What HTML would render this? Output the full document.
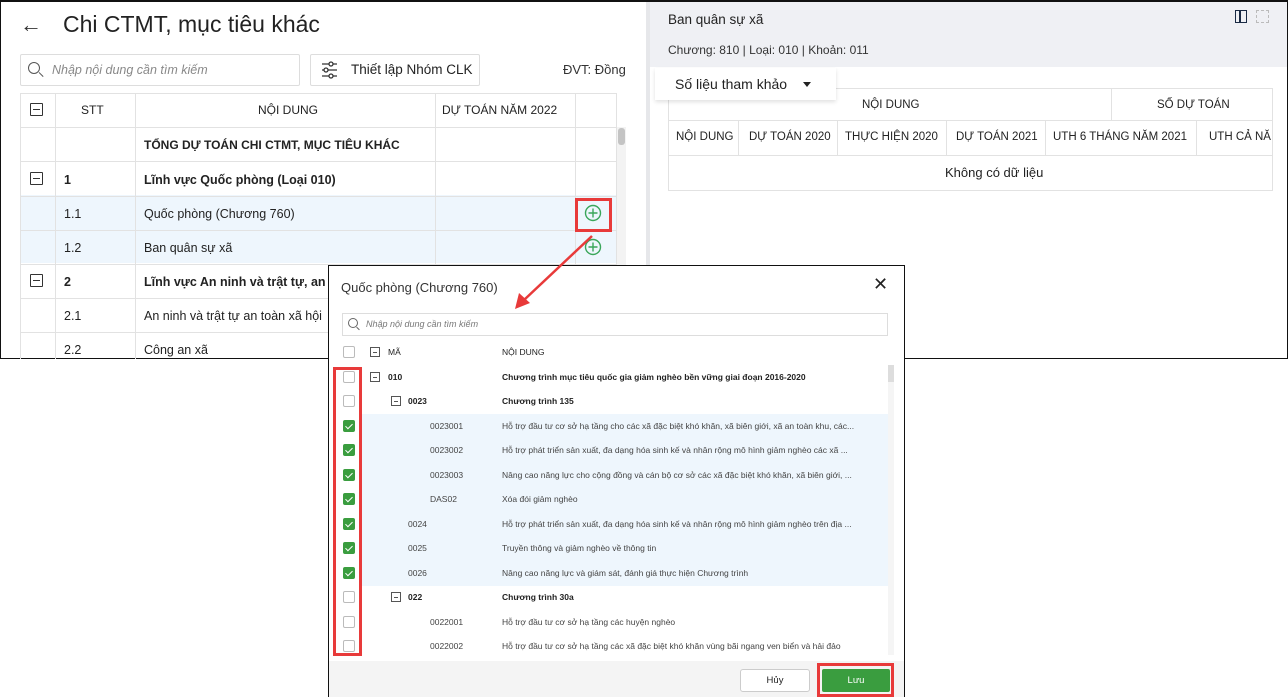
<!DOCTYPE html>
<html><head><meta charset="utf-8"><style>
*{box-sizing:border-box;margin:0;padding:0}
body{width:1288px;height:697px;position:relative;background:#fff;font-family:"Liberation Sans",sans-serif;color:#222;overflow:hidden}
.a{position:absolute}
.t{position:absolute;white-space:nowrap}
.cb{position:absolute;width:12px;height:12px;border:1px solid #bbb;border-radius:2px;background:#fff}
.cb.on{background:#3a9d3f;border-color:#3a9d3f}
.cb.on:after{content:"";position:absolute;left:3px;top:1px;width:3px;height:6px;border:solid #fff;border-width:0 1px 1px 0;transform:rotate(45deg)}
.mi{position:absolute;width:13px;height:13px;border:1px solid #333;border-radius:1px}
.mi:after{content:"";position:absolute;left:2px;right:2px;top:5px;height:1px;background:#333}
.sm{position:absolute;width:10px;height:10px;border:1px solid #555}
.sm:after{content:"";position:absolute;left:2px;right:2px;top:3.5px;height:1px;background:#555}
.rh{font-size:11.5px}
</style></head><body>
<div class="a" style="left:0;top:0;width:1288px;height:359px;border:1px solid #111;border-top:2px solid #111"></div>
<div class="a" style="left:646px;top:2px;width:4px;height:356px;background:#e6e7ea"></div>
<div class="a" style="left:650px;top:2px;width:637px;height:65px;background:#eff0f4"></div>
<div class="t" style="left:668px;top:12px;font-size:13.5px;color:#222">Ban quân sự xã</div>
<div class="t" style="left:668px;top:43px;font-size:12px;color:#333">Chương: 810 | Loại: 010 | Khoản: 011</div>
<div class="a" style="left:1235px;top:10px;width:12px;height:13px;border:1.5px solid #1a2a44"></div>
<div class="a" style="left:1239px;top:10px;width:1.5px;height:13px;background:#1a2a44"></div>
<div class="a" style="left:1256px;top:10px;width:13px;height:13px;border:1px dashed #bbb"></div>
<div class="a" style="left:668px;top:88px;width:605px;height:103px;border:1px solid #e2e2e2"></div>
<div class="a" style="left:668px;top:120px;width:605px;height:1px;background:#e2e2e2"></div>
<div class="a" style="left:668px;top:155px;width:605px;height:1px;background:#e2e2e2"></div>
<div class="a" style="left:1111px;top:88px;width:1px;height:32px;background:#e2e2e2"></div>
<div class="a" style="left:738px;top:121px;width:1px;height:34px;background:#e2e2e2"></div>
<div class="a" style="left:837px;top:121px;width:1px;height:34px;background:#e2e2e2"></div>
<div class="a" style="left:946px;top:121px;width:1px;height:34px;background:#e2e2e2"></div>
<div class="a" style="left:1045px;top:121px;width:1px;height:34px;background:#e2e2e2"></div>
<div class="a" style="left:1196px;top:121px;width:1px;height:34px;background:#e2e2e2"></div>
<div class="a" style="left:655px;top:68px;width:181px;height:32px;background:#fff;box-shadow:0 2px 4px rgba(0,0,0,.12)"></div>
<div class="t" style="left:675px;top:76px;font-size:14px;color:#222">Số liệu tham khảo</div>
<div class="a" style="left:803px;top:82px;border:4px solid transparent;border-top:5px solid #222"></div>
<div class="t rh" style="left:862px;top:99px">NỘI DUNG</div>
<div class="t rh" style="left:1157px;top:99px">SỐ DỰ TOÁN</div>
<div class="t rh" style="left:676px;top:131px">NỘI DUNG</div>
<div class="t rh" style="left:749px;top:131px">DỰ TOÁN 2020</div>
<div class="t rh" style="left:845px;top:131px">THỰC HIỆN 2020</div>
<div class="t rh" style="left:956px;top:131px">DỰ TOÁN 2021</div>
<div class="t rh" style="left:1053px;top:131px">UTH 6 THÁNG NĂM 2021</div>
<div class="t rh" style="left:1209px;top:131px">UTH CẢ NĂ</div>
<div class="t" style="left:945px;top:165px;font-size:13px">Không có dữ liệu</div>
<div class="t" style="left:20px;top:12px;font-size:22px;color:#333">←</div>
<div class="t" style="left:63px;top:11px;font-size:23px;color:#222">Chi CTMT, mục tiêu khác</div>
<div class="a" style="left:20px;top:54px;width:280px;height:32px;border:1px solid #ddd;border-radius:2px"></div>
<div class="a" style="left:28px;top:62px;width:12px;height:12px;border:1.3px solid #555;border-radius:50%"></div>
<div class="a" style="left:38px;top:74px;width:6px;height:1.3px;background:#555;transform:rotate(45deg)"></div>
<div class="t" style="left:52px;top:63px;font-size:12.5px;font-style:italic;color:#888">Nhập nội dung cần tìm kiếm</div>
<div class="a" style="left:310px;top:54px;width:170px;height:32px;border:1px solid #ddd;border-radius:2px"></div>
<svg class="a" style="left:321px;top:61px" width="17" height="18" viewBox="0 0 17 18" fill="none" stroke="#333" stroke-width="1.3"><path d="M1 3h15M1 9h15M1 15h15"/><circle cx="10" cy="3" r="2" fill="#fff"/><circle cx="5" cy="9" r="2" fill="#fff"/><circle cx="10" cy="15" r="2" fill="#fff"/></svg>
<div class="t" style="left:351px;top:62px;font-size:13.5px">Thiết lập Nhóm CLK</div>
<div class="t" style="left:563px;top:62px;font-size:13px;color:#333">ĐVT: Đồng</div>
<div class="a" style="left:20px;top:195px;width:597px;height:68px;background:#eef6fd"></div>
<div class="a" style="left:20px;top:93px;width:597px;height:266px;border:1px solid #e2e2e2;border-bottom:none"></div>
<div class="a" style="left:55px;top:93px;width:1px;height:266px;background:#e2e2e2"></div>
<div class="a" style="left:135px;top:93px;width:1px;height:266px;background:#e2e2e2"></div>
<div class="a" style="left:435px;top:93px;width:1px;height:266px;background:#e2e2e2"></div>
<div class="a" style="left:575px;top:93px;width:1px;height:266px;background:#e2e2e2"></div>
<div class="a" style="left:20px;top:127px;width:597px;height:1px;background:#e2e2e2"></div>
<div class="a" style="left:20px;top:161px;width:597px;height:1px;background:#e2e2e2"></div>
<div class="a" style="left:20px;top:196px;width:597px;height:1px;background:#e2e2e2"></div>
<div class="a" style="left:20px;top:230px;width:597px;height:1px;background:#e2e2e2"></div>
<div class="a" style="left:20px;top:264px;width:597px;height:1px;background:#e2e2e2"></div>
<div class="a" style="left:20px;top:298px;width:597px;height:1px;background:#e2e2e2"></div>
<div class="a" style="left:20px;top:332px;width:597px;height:1px;background:#e2e2e2"></div>
<div class="a" style="left:617px;top:127px;width:9px;height:231px;background:#f3f3f3"></div>
<div class="a" style="left:618px;top:128px;width:7px;height:17px;background:#c4c4c4;border-radius:3px"></div>
<div class="mi" style="left:30px;top:103px"></div>
<div class="t" style="left:81px;top:103px;font-size:12px">STT</div>
<div class="t" style="left:258px;top:103px;font-size:12px">NỘI DUNG</div>
<div class="t" style="left:442px;top:103px;font-size:12px">DỰ TOÁN NĂM 2022</div>
<div class="t" style="left:144px;top:138px;font-size:12px;font-weight:bold">TỔNG DỰ TOÁN CHI CTMT, MỤC TIÊU KHÁC</div>
<div class="mi" style="left:30px;top:172px"></div>
<div class="t" style="left:64px;top:173px;font-size:12.5px;font-weight:bold">1</div>
<div class="t" style="left:144px;top:173px;font-size:12.5px;font-weight:bold">Lĩnh vực Quốc phòng (Loại 010)</div>
<div class="t" style="left:64px;top:207px;font-size:12.5px">1.1</div>
<div class="t" style="left:144px;top:207px;font-size:12.5px">Quốc phòng (Chương 760)</div>
<div class="t" style="left:64px;top:241px;font-size:12.5px">1.2</div>
<div class="t" style="left:144px;top:241px;font-size:12.5px">Ban quân sự xã</div>
<div class="mi" style="left:30px;top:274px"></div>
<div class="t" style="left:64px;top:275px;font-size:12.5px;font-weight:bold">2</div>
<div class="t" style="left:144px;top:275px;font-size:12.5px;font-weight:bold">Lĩnh vực An ninh và trật tự, an toàn</div>
<div class="t" style="left:64px;top:309px;font-size:12.5px">2.1</div>
<div class="t" style="left:144px;top:309px;font-size:12.5px">An ninh và trật tự an toàn xã hội</div>
<div class="t" style="left:64px;top:343px;font-size:12.5px">2.2</div>
<div class="t" style="left:144px;top:343px;font-size:12.5px">Công an xã</div>
<svg class="a" style="left:584px;top:204px" width="18" height="18" viewBox="0 0 18 18" fill="none" stroke="#3aa65a" stroke-width="1.4"><circle cx="9" cy="9" r="7.5"/><path d="M9 4.5v9M4.5 9h9"/></svg>
<svg class="a" style="left:584px;top:238px" width="18" height="18" viewBox="0 0 18 18" fill="none" stroke="#3aa65a" stroke-width="1.4"><circle cx="9" cy="9" r="7.5"/><path d="M9 4.5v9M4.5 9h9"/></svg>
<div class="a" style="left:575px;top:198px;width:37px;height:34px;border:3px solid #e83a3a"></div>
<div class="a" style="left:328px;top:265px;width:577px;height:432px;background:#fff;border:1px solid #111"></div>
<div class="t" style="left:341px;top:280px;font-size:13px;color:#333">Quốc phòng (Chương 760)</div>
<div class="t" style="left:873px;top:274px;font-size:18px;color:#222">✕</div>
<div class="a" style="left:342px;top:313px;width:546px;height:23px;border:1px solid #ddd"></div>
<div class="a" style="left:348px;top:318px;width:10px;height:10px;border:1px solid #666;border-radius:50%"></div>
<div class="a" style="left:356px;top:328px;width:4px;height:1px;background:#666;transform:rotate(45deg)"></div>
<div class="t" style="left:366px;top:319px;font-size:9px;font-style:italic;color:#777">Nhập nội dung cần tìm kiếm</div>
<div class="a" style="left:360px;top:414px;width:528px;height:172px;background:#eef6fd"></div>
<div class="a" style="left:888px;top:365px;width:6px;height:290px;background:#f5f5f5"></div>
<div class="a" style="left:888px;top:365px;width:6px;height:17px;background:#ddd"></div>
<div class="cb" style="left:343px;top:346px"></div>
<div class="sm" style="left:370px;top:347px"></div>
<div class="t" style="left:388px;top:347px;font-size:8.5px">MÃ</div>
<div class="t" style="left:502px;top:347px;font-size:8.5px">NỘI DUNG</div>
<div style="font-size:8.5px">
<div class="cb" style="left:343px;top:371px"></div><div class="sm" style="left:370px;top:372px"></div><div class="t" style="left:388px;top:372px;font-weight:bold">010</div><div class="t" style="left:502px;top:372px;font-weight:bold">Chương trình mục tiêu quốc gia giảm nghèo bền vững giai đoạn 2016-2020</div>
<div class="cb" style="left:343px;top:395px"></div><div class="sm" style="left:391px;top:396px"></div><div class="t" style="left:408px;top:396px;font-weight:bold">0023</div><div class="t" style="left:502px;top:396px;font-weight:bold">Chương trình 135</div>
<div class="cb on" style="left:343px;top:420px"></div><div class="t" style="left:430px;top:421px;color:#444">0023001</div><div class="t" style="left:502px;top:421px;color:#444">Hỗ trợ đầu tư cơ sở hạ tầng cho các xã đặc biệt khó khăn, xã biên giới, xã an toàn khu, các...</div>
<div class="cb on" style="left:343px;top:444px"></div><div class="t" style="left:430px;top:445px;color:#444">0023002</div><div class="t" style="left:502px;top:445px;color:#444">Hỗ trợ phát triển sản xuất, đa dạng hóa sinh kế và nhân rộng mô hình giảm nghèo các xã ...</div>
<div class="cb on" style="left:343px;top:469px"></div><div class="t" style="left:430px;top:470px;color:#444">0023003</div><div class="t" style="left:502px;top:470px;color:#444">Nâng cao năng lực cho cộng đồng và cán bộ cơ sở các xã đặc biệt khó khăn, xã biên giới, ...</div>
<div class="cb on" style="left:343px;top:493px"></div><div class="t" style="left:430px;top:494px;color:#444">DAS02</div><div class="t" style="left:502px;top:494px;color:#444">Xóa đói giảm nghèo</div>
<div class="cb on" style="left:343px;top:518px"></div><div class="t" style="left:408px;top:519px;color:#444">0024</div><div class="t" style="left:502px;top:519px;color:#444">Hỗ trợ phát triển sản xuất, đa dạng hóa sinh kế và nhân rộng mô hình giảm nghèo trên địa ...</div>
<div class="cb on" style="left:343px;top:542px"></div><div class="t" style="left:408px;top:543px;color:#444">0025</div><div class="t" style="left:502px;top:543px;color:#444">Truyền thông và giảm nghèo về thông tin</div>
<div class="cb on" style="left:343px;top:567px"></div><div class="t" style="left:408px;top:568px;color:#444">0026</div><div class="t" style="left:502px;top:568px;color:#444">Nâng cao năng lực và giám sát, đánh giá thực hiện Chương trình</div>
<div class="cb" style="left:343px;top:591px"></div><div class="sm" style="left:391px;top:592px"></div><div class="t" style="left:408px;top:592px;font-weight:bold">022</div><div class="t" style="left:502px;top:592px;font-weight:bold">Chương trình 30a</div>
<div class="cb" style="left:343px;top:616px"></div><div class="t" style="left:430px;top:617px;color:#444">0022001</div><div class="t" style="left:502px;top:617px;color:#444">Hỗ trợ đầu tư cơ sở hạ tầng các huyện nghèo</div>
<div class="cb" style="left:343px;top:640px"></div><div class="t" style="left:430px;top:641px;color:#444">0022002</div><div class="t" style="left:502px;top:641px;color:#444">Hỗ trợ đầu tư cơ sở hạ tầng các xã đặc biệt khó khăn vùng bãi ngang ven biển và hải đảo</div>
</div>
<div class="a" style="left:329px;top:655px;width:575px;height:6px;background:#fff"></div>
<div class="a" style="left:329px;top:661px;width:575px;height:36px;background:#f4f4f4"></div>
<div class="a" style="left:740px;top:669px;width:70px;height:23px;background:#fff;border:1px solid #ccc;border-radius:3px"></div>
<div class="t" style="left:740px;top:675px;width:70px;text-align:center;font-size:9.5px">Hủy</div>
<div class="a" style="left:822px;top:669px;width:68px;height:23px;background:#3a9d3f;border-radius:2px"></div>
<div class="t" style="left:822px;top:675px;width:68px;text-align:center;font-size:9.5px;color:#fff">Lưu</div>
<div class="a" style="left:817px;top:663px;width:77px;height:34px;border:3px solid #e83a3a"></div>
<div class="a" style="left:333px;top:367px;width:29px;height:289px;border:3px solid #e83a3a"></div>
<svg class="a" style="left:0;top:0" width="1288" height="697"><line x1="592" y1="236" x2="524" y2="300" stroke="#e83a3a" stroke-width="2.5"/><path d="M515 309 L519 293 L530 303 Z" fill="#e83a3a"/></svg>
</body></html>
